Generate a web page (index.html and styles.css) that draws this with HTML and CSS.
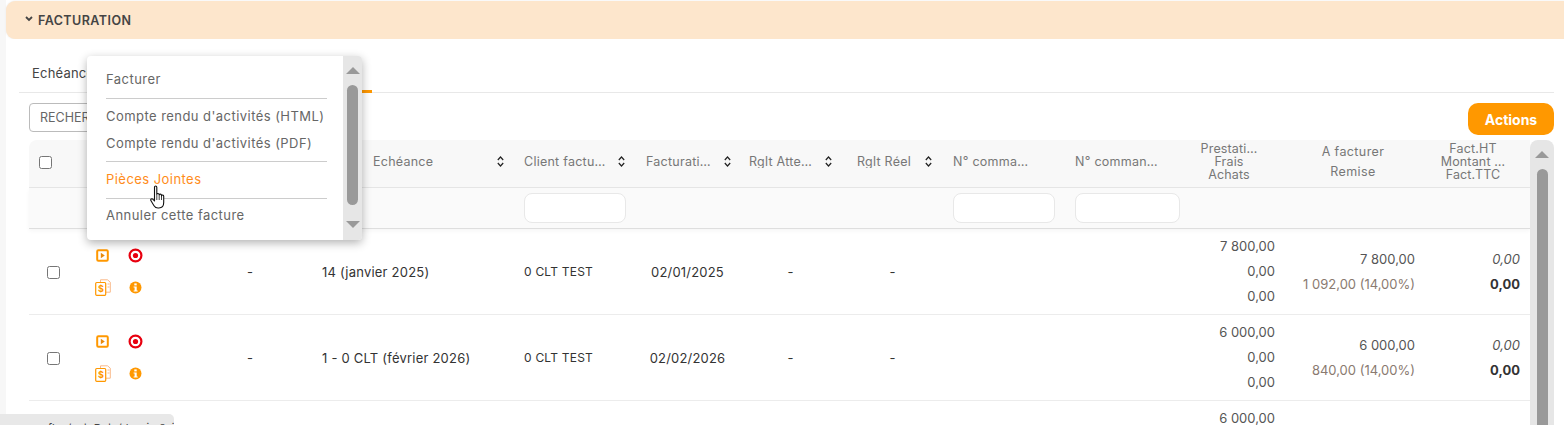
FILE: index.html
```html
<!DOCTYPE html>
<html lang="fr">
<head>
<meta charset="utf-8">
<title>Facturation</title>
<link rel="stylesheet" href="styles.css">
</head>
<body>
<div class="page">
  <header class="section-head">
    <svg class="chev" width="8" height="6" viewBox="0 0 8 6"><path d="M1 1l3 3 3-3" fill="none" stroke="#444" stroke-width="1.8"/></svg>
    <span>FACTURATION</span>
  </header>
  <div class="section-body">
    <nav class="tabs"><span class="tab">Echéances</span><span class="tab-active"></span></nav>
    <div class="toolbar">
      <div class="search">RECHERCHER</div>
      <button class="actions">Actions</button>
    </div>
    <div class="table-wrap">
      <div class="table">
        <div class="row head">
          <div class="cell c-check"><input type="checkbox"></div>
          <div class="cell"></div>
          <div class="cell"></div>
          <div class="cell sort wide"><span class="lbl">Echéance</span><svg class="si" width="7" height="11" viewBox="0 0 7 11"><path d="M.8 4l2.700-3 2.700 3M.8 7l2.700 3 2.700-3" fill="none" stroke="#222" stroke-width="1.200"/></svg></div>
          <div class="cell sort pr-11"><span class="lbl">Client factu…</span><svg class="si" width="7" height="11" viewBox="0 0 7 11"><path d="M.8 4l2.700-3 2.700 3M.8 7l2.700 3 2.700-3" fill="none" stroke="#222" stroke-width="1.200"/></svg></div>
          <div class="cell sort pr-8"><span class="lbl">Facturati…</span><svg class="si" width="7" height="11" viewBox="0 0 7 11"><path d="M.8 4l2.700-3 2.700 3M.8 7l2.700 3 2.700-3" fill="none" stroke="#222" stroke-width="1.200"/></svg></div>
          <div class="cell sort pr-15"><span class="lbl">Rglt Atte…</span><svg class="si" width="7" height="11" viewBox="0 0 7 11"><path d="M.8 4l2.700-3 2.700 3M.8 7l2.700 3 2.700-3" fill="none" stroke="#222" stroke-width="1.200"/></svg></div>
          <div class="cell sort pr-11"><span class="lbl">Rglt Réel</span><svg class="si" width="7" height="11" viewBox="0 0 7 11"><path d="M.8 4l2.700-3 2.700 3M.8 7l2.700 3 2.700-3" fill="none" stroke="#222" stroke-width="1.200"/></svg></div>
          <div class="cell sort"><span class="lbl">N° comma…</span></div>
          <div class="cell sort"><span class="lbl">N° comman…</span></div>
          <div class="cell stack prest"><span>Prestati…</span><span>Frais</span><span>Achats</span></div>
          <div class="cell stack fact"><span>A facturer</span><span>Remise</span></div>
          <div class="cell stack ttc"><span>Fact.HT</span><span>Montant …</span><span>Fact.TTC</span></div>
        </div>
        <div class="row filters">
          <div class="cell"></div><div class="cell"></div><div class="cell"></div><div class="cell"></div>
          <div class="cell"><div class="filter"></div></div>
          <div class="cell"></div><div class="cell"></div><div class="cell"></div>
          <div class="cell"><div class="filter"></div></div>
          <div class="cell"><div class="filter"></div></div>
          <div class="cell"></div><div class="cell"></div><div class="cell"></div>
        </div>
        <div class="row data">
          <div class="cell c-box"><input type="checkbox"></div>
          <div class="cell c-icons">
            <svg width="13" height="13" viewBox="0 0 13 13"><rect x="1.200" y="1.200" width="10.600" height="10.600" rx="1.200" fill="#fff" stroke="#ff9800" stroke-width="2"/><path d="M4.800 3.800l4 2.700-4 2.700z" fill="#e8890c"/></svg>
            <svg width="15" height="15" viewBox="0 0 15 15"><circle cx="7.500" cy="7.500" r="5.900" fill="#fff" stroke="#e8000f" stroke-width="2.200"/><circle cx="7.500" cy="7.500" r="2.600" fill="#e8000f"/></svg>
            <svg width="16" height="17" viewBox="0 0 16 17"><path d="M5.500 3V.8h7l2.800 2.400v10h-4.500" fill="#fff" stroke="#f9b98a" stroke-width="1"/><path d="M12.500 5h2M12.500 8h2" stroke="#f9b98a" stroke-width="1"/><rect x=".7" y="3.500" width="10" height="12.800" rx="1" fill="#fff" stroke="#ff9800" stroke-width="1.200"/><text x="3" y="13" class="dollar">$</text></svg>
            <svg width="13" height="13" viewBox="0 0 13 13"><circle cx="6.500" cy="6.500" r="6" fill="#ff9800"/><rect x="5.300" y="2.400" width="2.400" height="2" fill="#fff"/><path d="M4.600 5.400h3.100v4h1v1.200H4.600V9.400h1V6.600h-1z" fill="#fff"/></svg>
          </div>
          <div class="cell mid">-</div>
          <div class="cell left">14 (janvier 2025)</div>
          <div class="cell left small">0 CLT TEST</div>
          <div class="cell mid date">02/01/2025</div>
          <div class="cell mid dash">-</div>
          <div class="cell mid dash">-</div>
          <div class="cell"></div><div class="cell"></div>
          <div class="cell nums grey"><span>7 800,00</span><span>0,00</span><span>0,00</span></div>
          <div class="cell nums grey"><span>7 800,00</span><span class="rem">1 092,00 (14,00%)</span></div>
          <div class="cell nums grey"><span class="it">0,00</span><span class="bd">0,00</span></div>
        </div>
        <div class="row data">
          <div class="cell c-box"><input type="checkbox"></div>
          <div class="cell c-icons">
            <svg width="13" height="13" viewBox="0 0 13 13"><rect x="1.200" y="1.200" width="10.600" height="10.600" rx="1.200" fill="#fff" stroke="#ff9800" stroke-width="2"/><path d="M4.800 3.800l4 2.700-4 2.700z" fill="#e8890c"/></svg>
            <svg width="15" height="15" viewBox="0 0 15 15"><circle cx="7.500" cy="7.500" r="5.900" fill="#fff" stroke="#e8000f" stroke-width="2.200"/><circle cx="7.500" cy="7.500" r="2.600" fill="#e8000f"/></svg>
            <svg width="16" height="17" viewBox="0 0 16 17"><path d="M5.500 3V.8h7l2.800 2.400v10h-4.500" fill="#fff" stroke="#f9b98a" stroke-width="1"/><path d="M12.500 5h2M12.500 8h2" stroke="#f9b98a" stroke-width="1"/><rect x=".7" y="3.500" width="10" height="12.800" rx="1" fill="#fff" stroke="#ff9800" stroke-width="1.200"/><text x="3" y="13" class="dollar">$</text></svg>
            <svg width="13" height="13" viewBox="0 0 13 13"><circle cx="6.500" cy="6.500" r="6" fill="#ff9800"/><rect x="5.300" y="2.400" width="2.400" height="2" fill="#fff"/><path d="M4.600 5.400h3.100v4h1v1.200H4.600V9.400h1V6.600h-1z" fill="#fff"/></svg>
          </div>
          <div class="cell mid">-</div>
          <div class="cell left">1 - 0 CLT (février 2026)</div>
          <div class="cell left small">0 CLT TEST</div>
          <div class="cell mid date">02/02/2026</div>
          <div class="cell mid dash">-</div>
          <div class="cell mid dash">-</div>
          <div class="cell"></div><div class="cell"></div>
          <div class="cell nums grey"><span>6 000,00</span><span>0,00</span><span>0,00</span></div>
          <div class="cell nums grey"><span>6 000,00</span><span class="rem">840,00 (14,00%)</span></div>
          <div class="cell nums grey"><span class="it">0,00</span><span class="bd">0,00</span></div>
        </div>
        <div class="row data">
          <div class="cell"></div><div class="cell"></div><div class="cell"></div><div class="cell"></div><div class="cell"></div><div class="cell"></div><div class="cell"></div><div class="cell"></div><div class="cell"></div><div class="cell"></div>
          <div class="cell nums grey"><span>6 000,00</span><span>0,00</span><span>0,00</span></div>
          <div class="cell"></div><div class="cell"></div>
        </div>
      </div>
      <div class="vscroll">
        <span class="arrow up"></span>
        <span class="thumb"></span>
      </div>
    </div>
  </div>
</div>

<div class="menu">
  <div class="menu-list">
    <div class="item first">Facturer</div>
    <hr>
    <div class="item">Compte rendu d'activités (HTML)</div>
    <div class="item">Compte rendu d'activités (PDF)</div>
    <hr class="tight">
    <div class="item hot">Pièces Jointes</div>
    <hr class="low">
    <div class="item">Annuler cette facture</div>
  </div>
  <div class="menu-scroll">
    <span class="arrow up"></span>
    <span class="menu-thumb"></span>
    <span class="arrow down"></span>
  </div>
</div>

<svg class="hand" width="18" height="26" viewBox="0 0 18 26"><path d="M4.500 2.200c0-1.600 2.300-1.600 2.300 0v7.300c.2-1.400 2.200-1.400 2.300 0l.1.6c.2-1.300 2.200-1.300 2.300.1v.7c.3-1.200 2.200-1.100 2.200.3v6.400c0 3-1.600 5.400-4.800 5.400H8c-2 0-3.100-.9-4-2.300L1 15.800c-.9-1.500.9-2.700 2-1.500l1.500 1.700z" fill="#fff" stroke="#111" stroke-width="1.100" stroke-linejoin="round"/><path d="M6.800 10v5M9.200 10.500v4.500M11.500 11v4" stroke="#111" stroke-width=".8" fill="none"/></svg>

<div class="status">flux/actuData/dossier?aide=3#</div>
</body>
</html>
```
FILE: styles.css
```css
* { box-sizing: border-box; }
html, body { margin: 0; height: 425px; overflow: hidden; background: #fff; }
body { font-family: Inter, "Noto Sans", sans-serif; font-size: 13px; color: #333; position: relative; }

.page { padding: 1px 0 0 6px; background: linear-gradient(to right, #f7f7f7 6px, #fff 6px); height: 425px; overflow: hidden; }
.section-head {
  height: 38px; background: #fde6cc; border-radius: 9px 0 0 9px;
  display: flex; align-items: center; gap: 5px; padding-left: 19px;
  font-size: 12.5px; font-weight: 600; color: #444; letter-spacing: .45px;
  box-shadow: 0 0 2px #e6e6e6;
}
.chev { margin-top: -3px; }
.section-body { padding: 0 10px 0 13px; background: #fff; }

.tabs { height: 54px; border-bottom: 1px solid #e8e8e8; position: relative; padding: 26px 0 0 13px; color: #444; font-size: 13px; letter-spacing: .2px; }
.tab-active { position: absolute; left: 260px; bottom: -1px; width: 93px; height: 3px; background: #ff9800; }

.toolbar { display: flex; justify-content: space-between; align-items: flex-start; padding: 10px 0 0 10px; height: 47px; }
.search { width: 120px; height: 29px; border: 1px solid #bbb; border-radius: 4px; padding: 6px 0 0 10px; font-size: 12.5px; color: #666; }
.actions { width: 86px; height: 32px; border: 0; border-radius: 10px; background: #ff9800; color: #fff; font: 700 14px Inter, sans-serif; margin-right: 0; }

.table-wrap { display: flex; margin-left: 10px; }
.table { width: 1501px; flex: none; }
.row { display: grid; grid-template-columns: 49px 110px 124px 202px 122px 103px 108px 96px 122px 125px 95px 140px 105px; }
.head { height: 48px; padding-bottom: 4px; background: #f8f8f8; border-bottom: 1px solid #e6e6e6; border-radius: 8px 0 0 0; color: #777; font-size: 12.5px; line-height: 13px; }
.filters { height: 41px; background: #fafafa; border-bottom: 1px solid #dedede; box-shadow: 0 2px 4px rgba(0,0,0,.04); }
.data { height: 86px; border-bottom: 1px solid #ececec; }

.cell { min-width: 0; }
.head .cell { display: flex; align-items: center; }
.c-check { padding: 1px 0 0 10px; }
.c-check input, .c-box input { margin: 0; width: 13px; height: 13px; }
.sort { padding: 0 10px; white-space: nowrap; gap: 3px; justify-content: space-between; }
.sort .lbl { overflow: hidden; letter-spacing: .25px; }
.wide { padding-left: 61px; }
.pr-8 { padding-right: 8px; }
.pr-11 { padding-right: 11px; }
.pr-15 { padding-right: 15px; }
.si { flex: none; }
.stack { flex-direction: column; justify-content: center; text-align: center; white-space: nowrap; letter-spacing: .15px; }
.prest { padding-right: 27px; padding-left: 10px; }
.fact { gap: 7px; padding-left: 0; padding-right: 4px; letter-spacing: .4px; }
.ttc { padding-right: 9px; }

.filters .cell { padding: 5px 10px 0; }
.filter { height: 30px; background: #fff; border: 1px solid #e8e8e8; border-radius: 8px; }

.data .cell { display: flex; align-items: center; }
.c-box { padding: 2px 0 0 18px; }
.c-icons.cell { display: grid; grid-template-columns: 33px 33px; grid-template-rows: 32px 32px; padding: 10px 0 0 8px; align-items: center; justify-items: center; align-content: start; justify-content: start; }
.c-icons svg { display: block; }
.dollar { font: 700 9px Inter, sans-serif; fill: #ff9800; }
.mid.cell { justify-content: center; color: #333; }
.dash.cell { padding-right: 5px; }
.date.cell { letter-spacing: .2px; }
.left.cell { padding-left: 10px; letter-spacing: .22px; white-space: nowrap; }
.small.cell { font-size: 12px; }
.nums.cell { flex-direction: column; justify-content: center; align-items: flex-end; padding-right: 10px; line-height: 25px; white-space: nowrap; }
.grey { color: #555; }
.rem { color: #8a7a70; }
.it { font-style: italic; }
.bd { font-weight: 700; color: #333; }

.vscroll { width: 24px; height: 290px; background: #e6e6e6; border-radius: 8px 8px 0 0; flex: none; position: relative; display: flex; flex-direction: column; align-items: center; padding-top: 11px; }
.arrow { display: block; width: 0; height: 0; border-left: 7px solid transparent; border-right: 7px solid transparent; }
.arrow.up { border-bottom: 7px solid #999; }
.arrow.down { border-top: 7px solid #999; margin-top: 16px; }
.thumb { display: block; width: 11px; flex: 1; margin-top: 11px; background: #999; border-radius: 6px 6px 0 0; }

.menu { position: absolute; left: 87px; top: 56px; width: 275px; height: 184px; background: #fff; border-radius: 4px; box-shadow: 0 3px 10px rgba(0,0,0,.3); display: flex; overflow: hidden; }
.menu-list { flex: 1; padding: 0 16px 0 19px; color: #666; font-size: 13px; letter-spacing: .45px; white-space: nowrap; }
.item { height: 27px; line-height: 27px; }
.item.first { margin-top: 10px; }
.item.hot { color: #ff8c1a; height: 26px; }
.menu hr { border: 0; border-top: 1px solid #ccc; margin: 5px 0 4px; height: 0; }
.menu hr.tight { margin: 4px 0 4px; }
.menu hr.low { margin: 6px 0 3px; }
.menu-scroll { width: 19px; background: #e6e6e6; display: flex; flex-direction: column; align-items: center; padding-top: 11px; }
.menu-thumb { display: block; width: 11px; height: 120px; margin-top: 11px; background: #999; border-radius: 6px; }

.hand { position: absolute; left: 150px; top: 185px; }
.status { position: absolute; left: 0; top: 414px; width: 174px; height: 11px; background: #e8e8e8; border-radius: 0 5px 0 0; overflow: hidden; font-size: 11px; color: #444; padding-left: 48px; white-space: nowrap; line-height: 28px; }
```
